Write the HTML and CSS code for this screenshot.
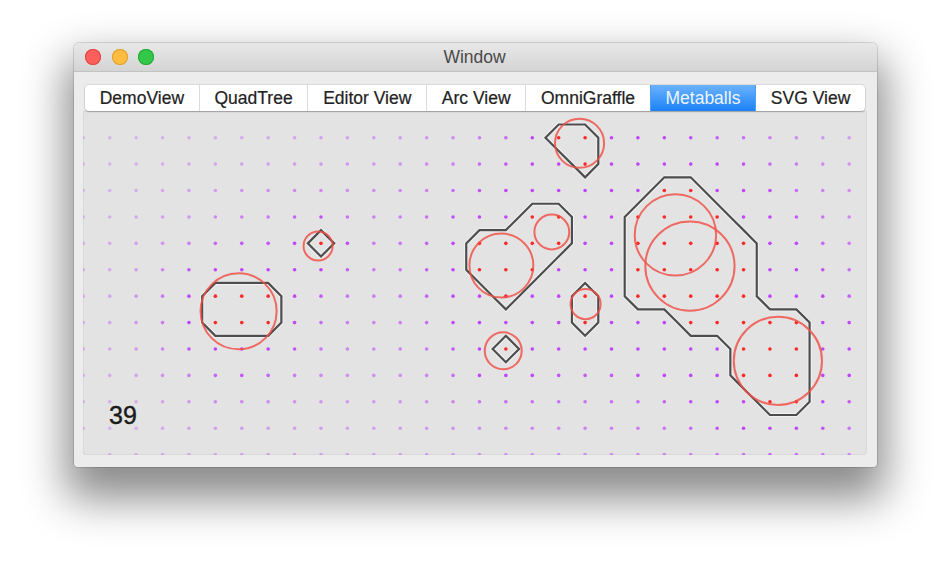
FILE: index.html
```html
<!DOCTYPE html>
<html>
<head>
<meta charset="utf-8">
<title>Window</title>
<link rel="stylesheet" href="styles.css">
</head>
<body>
<div class="window">
  <div class="titlebar">
    <div class="lights">
      <span class="light close"></span>
      <span class="light min"></span>
      <span class="light zoom"></span>
    </div>
    <div class="title">Window</div>
    <div></div>
  </div>
  <div class="content">
    <div class="tabs">
      <div class="tab">DemoView</div>
      <div class="tab">QuadTree</div>
      <div class="tab">Editor View</div>
      <div class="tab">Arc View</div>
      <div class="tab">OmniGraffle</div>
      <div class="tab selected">Metaballs</div>
      <div class="tab">SVG View</div>
    </div>
    <div class="box">
      <svg class="canvas" width="784" height="344" viewBox="0 0 784 344">
        <g id="dots"></g>
        <g class="shapes" transform="translate(0.3 0.3) scale(26.41)">
          <g class="halo">
            <polygon points="8.5,5 9,4.5 9.5,5 9,5.5" vector-effect="non-scaling-stroke"/>
            <polygon points="5,6.5 7,6.5 7.5,7 7.5,8 7,8.5 5,8.5 4.5,8 4.5,7" vector-effect="non-scaling-stroke"/>
            <polygon points="18,0.5 19,0.5 19.5,1 19.5,2 19,2.5 18.5,2 18,1.5 17.5,1" vector-effect="non-scaling-stroke"/>
            <polygon points="17,3.5 18,3.5 18.5,4 18.5,5 18,5.5 17.5,6 17,6.5 16.5,7 16,7.5 15.5,7 15,6.5 14.5,6 14.5,5 15,4.5 16,4.5 16.5,4" vector-effect="non-scaling-stroke"/>
            <polygon points="15.5,9 16,8.5 16.5,9 16,9.5" vector-effect="non-scaling-stroke"/>
            <polygon points="19,6.5 19.5,7 19.5,8 19,8.5 18.5,8 18.5,7" vector-effect="non-scaling-stroke"/>
            <polygon points="22,2.5 23,2.5 23.5,3 24,3.5 24.5,4 25,4.5 25.5,5 25.5,7 26,7.5 27,7.5 27.5,8 27.5,11 27,11.5 26,11.5 25.5,11 25,10.5 24.5,10 24.5,9 24,8.5 23,8.5 22.5,8 22,7.5 21,7.5 20.5,7 20.5,4 21,3.5 21.5,3" vector-effect="non-scaling-stroke"/>
          </g>
          <g class="contour">
            <polygon points="8.5,5 9,4.5 9.5,5 9,5.5" vector-effect="non-scaling-stroke"/>
            <polygon points="5,6.5 7,6.5 7.5,7 7.5,8 7,8.5 5,8.5 4.5,8 4.5,7" vector-effect="non-scaling-stroke"/>
            <polygon points="18,0.5 19,0.5 19.5,1 19.5,2 19,2.5 18.5,2 18,1.5 17.5,1" vector-effect="non-scaling-stroke"/>
            <polygon points="17,3.5 18,3.5 18.5,4 18.5,5 18,5.5 17.5,6 17,6.5 16.5,7 16,7.5 15.5,7 15,6.5 14.5,6 14.5,5 15,4.5 16,4.5 16.5,4" vector-effect="non-scaling-stroke"/>
            <polygon points="15.5,9 16,8.5 16.5,9 16,9.5" vector-effect="non-scaling-stroke"/>
            <polygon points="19,6.5 19.5,7 19.5,8 19,8.5 18.5,8 18.5,7" vector-effect="non-scaling-stroke"/>
            <polygon points="22,2.5 23,2.5 23.5,3 24,3.5 24.5,4 25,4.5 25.5,5 25.5,7 26,7.5 27,7.5 27.5,8 27.5,11 27,11.5 26,11.5 25.5,11 25,10.5 24.5,10 24.5,9 24,8.5 23,8.5 22.5,8 22,7.5 21,7.5 20.5,7 20.5,4 21,3.5 21.5,3" vector-effect="non-scaling-stroke"/>
          </g>
          <g class="balls">
            <circle cx="8.89" cy="5.10" r="0.55" vector-effect="non-scaling-stroke"/>
            <circle cx="5.88" cy="7.57" r="1.44" vector-effect="non-scaling-stroke"/>
            <circle cx="18.79" cy="1.21" r="0.93" vector-effect="non-scaling-stroke"/>
            <circle cx="15.83" cy="5.84" r="1.21" vector-effect="non-scaling-stroke"/>
            <circle cx="17.74" cy="4.57" r="0.66" vector-effect="non-scaling-stroke"/>
            <circle cx="15.90" cy="9.07" r="0.70" vector-effect="non-scaling-stroke"/>
            <circle cx="19.02" cy="7.30" r="0.57" vector-effect="non-scaling-stroke"/>
            <circle cx="22.42" cy="4.68" r="1.54" vector-effect="non-scaling-stroke"/>
            <circle cx="22.97" cy="5.86" r="1.69" vector-effect="non-scaling-stroke"/>
            <circle cx="26.30" cy="9.45" r="1.67" vector-effect="non-scaling-stroke"/>
          </g>
        </g>
        <text class="count" x="26" y="313">39</text>
      </svg>
    </div>
  </div>
</div>
<script src="script.js"></script>
</body>
</html>
```

FILE: styles.css
```css
* { box-sizing: border-box; }

html, body {
  margin: 0;
  background: #ffffff;
}

body {
  width: 950px;
  height: 574px;
  overflow: hidden;
  font-family: "Liberation Sans", Arial, sans-serif;
}

.window {
  margin: 43px 0 0 74px;
  width: 803px;
  height: 424px;
  background: #ececec;
  border-radius: 5px 5px 4px 4px;
  box-shadow: 0 0 0 1px rgba(0, 0, 0, 0.12), 0 24px 44px 8px rgba(0, 0, 0, 0.46);
  overflow: hidden;
}

.titlebar {
  height: 29px;
  display: grid;
  grid-template-columns: 1fr auto 1fr;
  align-items: center;
  background: linear-gradient(#e8e8e8, #d4d4d4);
  border-bottom: 1px solid #c2c2c2;
}

.lights {
  display: flex;
  gap: 10.5px;
  padding-left: 11px;
}

.light {
  width: 16px;
  height: 16px;
  border-radius: 50%;
}

.light.close { background: #fc605c; box-shadow: inset 0 0 0 1px #e0463f; }
.light.min { background: #fdbc40; box-shadow: inset 0 0 0 1px #dfa02c; }
.light.zoom { background: #34c84a; box-shadow: inset 0 0 0 1px #25a837; }

.title {
  font-size: 17.5px;
  color: #4a4a4a;
  padding-right: 2px;
}

.content {
  padding: 13px 10px 12px 9px;
}

.tabs {
  display: flex;
  height: 26px;
  margin: 0 2px;
  background: #ffffff;
  border-radius: 4px;
  box-shadow: 0 0 0 1px rgba(0, 0, 0, 0.07), 0 1px 1.5px rgba(0, 0, 0, 0.22);
  overflow: hidden;
  position: relative;
  z-index: 1;
}

.tab {
  flex: 1 1 auto;
  display: flex;
  align-items: center;
  justify-content: center;
  font-size: 17.5px;
  color: #222222;
  border-left: 1px solid #dadada;
  white-space: nowrap;
  -webkit-text-stroke: 0.2px #222222;
}

.tab:first-child { border-left: 0; }

.tab.selected {
  background: linear-gradient(#6cb2fd, #1b82f6);
  color: #eef5ff;
  -webkit-text-stroke: 0;
  border-left-color: #4f9cf5;
}

.tab.selected + .tab { border-left-color: #4f9cf5; }

.box {
  height: 344px;
  background: #e3e3e3;
  border-radius: 0 0 4px 4px;
  overflow: hidden;
  box-shadow: inset 0 0 0 1px rgba(0, 0, 0, 0.045);
}

.canvas {
  display: block;
}

.halo polygon {
  fill: none;
  stroke: rgba(255, 255, 255, 0.55);
  stroke-width: 4px;
  stroke-linejoin: miter;
}

.contour polygon {
  fill: none;
  stroke: #4d4d4d;
  stroke-width: 2.2px;
  stroke-linejoin: miter;
}

.balls circle {
  fill: none;
  stroke: rgba(240, 78, 68, 0.82);
  stroke-width: 2px;
}

.count {
  font-family: "Liberation Sans", Arial, sans-serif;
  font-size: 25px;
  fill: #1a1a1a;
  stroke: #1a1a1a;
  stroke-width: 0.4px;
}
```

FILE: script.js
```js
(function () {
  var S = 26.41, OX = 0.3, OY = 0.3;
  var NS = "http://www.w3.org/2000/svg";
  var balls = [
    [8.89, 5.10, 0.55], [5.88, 7.57, 1.44], [18.79, 1.21, 0.93],
    [15.83, 5.84, 1.21], [17.74, 4.57, 0.66], [15.90, 9.07, 0.70],
    [19.02, 7.30, 0.57], [22.42, 4.68, 1.54], [22.97, 5.86, 1.69],
    [26.30, 9.45, 1.67]
  ];
  var inside = {
    1: [18, 19],
    2: [19],
    3: [22, 23],
    4: [17, 18, 21, 22, 23, 24],
    5: [9, 15, 16, 17, 18, 21, 22, 23, 24, 25],
    6: [15, 16, 17, 21, 22, 23, 24, 25],
    7: [5, 6, 7, 16, 19, 21, 22, 23, 24, 25],
    8: [5, 6, 7, 19, 23, 24, 25, 26, 27],
    9: [16, 25, 26, 27],
    10: [25, 26, 27],
    11: [26, 27]
  };
  var g = document.getElementById("dots");
  for (var j = 1; j <= 13; j++) {
    for (var i = 0; i <= 29; i++) {
      var f = 0;
      for (var k = 0; k < balls.length; k++) {
        var dx = i - balls[k][0], dy = j - balls[k][1];
        var d2 = dx * dx + dy * dy;
        if (d2 < 0.0001) d2 = 0.0001;
        f += balls[k][2] * balls[k][2] / d2;
      }
      var c = document.createElementNS(NS, "circle");
      c.setAttribute("cx", (OX + i * S).toFixed(2));
      c.setAttribute("cy", (OY + j * S).toFixed(2));
      c.setAttribute("r", "1.8");
      var isIn = inside[j] && inside[j].indexOf(i) >= 0;
      if (isIn) {
        c.setAttribute("fill", "#ff2626");
      } else {
        var a = Math.min(1, 0.17 + 1.8 * f);
        c.setAttribute("fill", "rgba(192,68,252," + a.toFixed(3) + ")");
      }
      g.appendChild(c);
    }
  }
})();
```
